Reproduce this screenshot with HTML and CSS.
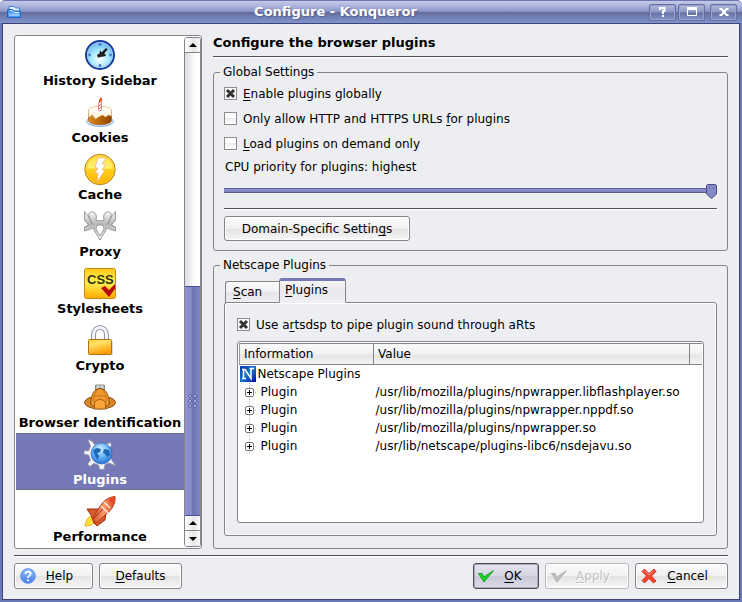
FILE: index.html
```html
<!DOCTYPE html>
<html lang="en">
<head>
<meta charset="utf-8">
<title>Configure - Konqueror</title>
<link rel="stylesheet" href="styles.css">
</head>
<body>
<div class="window">
  <header class="titlebar">
    <svg class="title-icon" width="16" height="16" viewBox="0 0 16 16">
      <path d="M3 2.500h5l1.500 1.500h4v9h-10.500z" fill="#e4f1ff" stroke="#3b7fdc"/>
      <path d="M1.500 13.500v-8l5 0 1.500 1.500h6.500v6.500z" fill="#4a97f0" stroke="#1f62cc"/>
      <path d="M3 9.500h10.500v2.500H3z" fill="#8cc4ff"/>
      <path d="M4 6.500h2l2 2h5" fill="none" stroke="#d5eaff"/>
    </svg>
    <h1 class="title">Configure - Konqueror</h1>
    <div class="title-buttons">
      <button class="tb-btn" aria-label="Help">
        <svg width="12" height="12" viewBox="0 0 12 12"><path d="M3 4V2h4.500v3H6v3M5 10h2" fill="none" stroke="#fff" stroke-width="2"/></svg>
      </button>
      <button class="tb-btn" aria-label="Maximize">
        <svg width="12" height="12" viewBox="0 0 12 12"><path d="M1.500 2v7.500h9V2" fill="none" stroke="#fff"/><path d="M1 2.500h10" stroke="#fff" stroke-width="3"/></svg>
      </button>
      <button class="tb-btn tb-close" aria-label="Close">
        <svg width="12" height="12" viewBox="0 0 12 12"><path d="M1.500 3h2L8.500 9h2M10.500 3h-2L3.500 9h-2" fill="none" stroke="#fff" stroke-width="2"/></svg>
      </button>
    </div>
  </header>

  <main class="content">
    <div class="panes">
      <nav class="sidebar">
        <ul class="pages">
          <li class="page">
            <svg width="32" height="32" viewBox="0 0 32 32">
              <defs><radialGradient id="clk" cx=".5" cy=".65" r=".6"><stop offset="0" stop-color="#fff"/><stop offset=".5" stop-color="#a9ebff"/><stop offset="1" stop-color="#69b6ee"/></radialGradient></defs>
              <circle cx="16" cy="15" r="14" fill="url(#clk)" stroke="#143d9c" stroke-width="2"/>
              <circle cx="16" cy="15" r="12.500" fill="none" stroke="#a8c8ef"/>
              <g fill="#4a7cc4"><circle cx="16" cy="4.500" r="1.400"/><circle cx="16" cy="25.500" r="1.400"/><circle cx="5.500" cy="15" r="1.400"/><circle cx="26.500" cy="15" r="1.400"/></g>
              <path d="M16 10l1.500 2.500L22 8l1.500 1.500L18 16l-4 1.500-.5-2 2-2z" fill="#111"/><path d="M13 14.500l8-1 1 2.500-8 1.500z" fill="#222"/>
            </svg>
            <a class="page-link" href="#">History Sidebar</a>
          </li>
          <li class="page">
            <svg width="32" height="32" viewBox="0 0 32 32">
              <defs><linearGradient id="cake"><stop offset="0" stop-color="#d98a2b"/><stop offset=".5" stop-color="#b86408"/><stop offset="1" stop-color="#8c4500"/></linearGradient></defs>
              <ellipse cx="16" cy="24.500" rx="13.500" ry="4.800" fill="#f4f8ff" stroke="#6f9fda"/>
              <path d="M4.500 14v10c2 5 21 5 23 0V14z" fill="url(#cake)" stroke="#8a5520" stroke-width=".6"/>
              <path d="M4.500 13c0-5 23-5 23 0v6l-3-1-3 2-3-2-4 2-3 2-3-4-4 2z" fill="#fff6e4" stroke="#d9b07a" stroke-width=".7"/>
              <ellipse cx="16" cy="13" rx="10.500" ry="3" fill="#fffdf6"/>
              <path d="M14.500 5.500h3v8h-3z" fill="#fff" stroke="#dc6a6a" stroke-width=".7"/>
              <path d="M14.500 9l3-2M14.500 12l3-2" stroke="#e35555"/>
              <path d="M17 0c2 3 1 5-1 6-2-2-1-3 1-6z" fill="#f04a1c"/><path d="M16.500 3l.5 2-1 1z" fill="#ffd34d"/>
            </svg>
            <a class="page-link" href="#">Cookies</a>
          </li>
          <li class="page">
            <svg width="32" height="32" viewBox="0 0 32 32">
              <defs><linearGradient id="cache" x2="0" y2="1"><stop offset="0" stop-color="#ffe04a"/><stop offset=".45" stop-color="#fff16a"/><stop offset=".5" stop-color="#ffd01c"/><stop offset="1" stop-color="#ffae00"/></linearGradient></defs>
              <circle cx="16" cy="15.500" r="15.200" fill="url(#cache)" stroke="#bd8420"/>
              <circle cx="16" cy="15.500" r="13.800" fill="none" stroke="#ffc82a"/>
              <path d="M14 4h8l-4 6 4 0-4 6 3 0-8 12 1-9h-3l3-5h-3z" fill="#fff" stroke="#e3b98c" stroke-width=".8"/>
            </svg>
            <a class="page-link" href="#">Cache</a>
          </li>
          <li class="page">
            <svg width="32" height="32" viewBox="0 0 32 32">
              <defs><linearGradient id="prx" x2="0" y2="1"><stop offset="0" stop-color="#fafafa"/><stop offset=".45" stop-color="#b4b4b4"/><stop offset="1" stop-color="#fff"/></linearGradient></defs>
              <path d="M.5.500L5 6C4 2 6 .5 9 1c3 1 4 4 3 8 2 1 6 1 8 0-1-4 0-7 3-8 3-.5 5 1 4 5L31.500.500V9l-4 5 4 2v4l-6-2-3-1-1 3-5.500 9L10.500 20l-1-3-3 1-6 2v-4l4-2-4-5z" fill="url(#prx)" stroke="#858585" stroke-width=".8"/>
              <path d="M5 6l3 7M27 6l-3 7" stroke="#888"/>
              <path d="M16 14c3 0 4 1 4 4l-4 7-4-7c0-3 1-4 4-4z" fill="#fff" stroke="#999"/>
            </svg>
            <a class="page-link" href="#">Proxy</a>
          </li>
          <li class="page">
            <svg width="32" height="32" viewBox="0 0 32 32">
              <defs><linearGradient id="css" x2="0" y2="1"><stop offset="0" stop-color="#ffc819"/><stop offset=".45" stop-color="#fff252"/><stop offset="1" stop-color="#ffab00"/></linearGradient></defs>
              <rect x=".5" y=".5" width="31" height="30" rx="2" fill="url(#css)" stroke="#c98518"/>
              <text class="css-glyph" x="3" y="16">CSS</text>
              <path d="M17 20l4-2 4 4 6-6v5l-6 8z" fill="#b80c0c"/>
            </svg>
            <a class="page-link" href="#">Stylesheets</a>
          </li>
          <li class="page">
            <svg width="32" height="32" viewBox="0 0 32 32">
              <defs><linearGradient id="lock" x2=".4" y2="1"><stop offset="0" stop-color="#ffd02c"/><stop offset=".35" stop-color="#ffe36a"/><stop offset="1" stop-color="#ff9d08"/></linearGradient></defs>
              <path d="M9.500 16v-6c0-10 13-10 13 0v6" fill="none" stroke="#8f94a6" stroke-width="5"/>
              <path d="M9.500 16v-6c0-10 13-10 13 0v6" fill="none" stroke="#f2f3f8" stroke-width="3"/>
              <path d="M5.500 16h23v14h-23z" fill="#b9b9b9"/>
              <rect x="4.500" y="14.500" width="23" height="15" rx="1" fill="url(#lock)" stroke="#b56f18"/>
            </svg>
            <a class="page-link" href="#">Crypto</a>
          </li>
          <li class="page">
            <svg width="32" height="32" viewBox="0 0 32 32">
              <path d="M11.500 3h9v5h-9z" fill="#bbb" stroke="#888"/><path d="M14 3v4M18 3v4" stroke="#eee"/>
              <ellipse cx="16" cy="20.500" rx="15.500" ry="6.500" fill="#d9852a" stroke="#8b5012"/>
              <path d="M6.500 21c1-4 1-14 9.500-14.500 8.500.5 8.500 10.500 9.500 14.500-2 6-17 6-19 0z" fill="#f09a2c" stroke="#8b5012"/>
              <path d="M9 14h14M13 8c-3 5-3 8-3 12M19 8c3 5 3 8 3 12" fill="none" stroke="#c9771c"/>
              <path d="M10.500 27v-5c0-6 11-6 11 0v5z" fill="#f9a53a" stroke="#a8611a"/>
            </svg>
            <a class="page-link" href="#">Browser Identification</a>
          </li>
          <li class="page selected">
            <svg width="32" height="32" viewBox="0 0 32 32">
              <defs><radialGradient id="globe" cx=".45" cy=".3" r=".75"><stop offset="0" stop-color="#d5efff"/><stop offset=".5" stop-color="#62b4f6"/><stop offset="1" stop-color="#1e64cf"/></radialGradient></defs>
              <path d="M3.500 0l5 2.500 2 3 4-1.500 8 1 4-1.500 1 3-2 2.500 1.500 9 1 3.500 4 5.500-7-3-4 1.500-1 5-4.500 0-1-4.500-4.500-1.500-4 3-2.500-2.500 3-4-2-5-4.500-.5v-4l4.500.5 2-5z" fill="#f4f4f4" stroke="#8a8aa0" stroke-width=".8"/>
              <circle cx="17.500" cy="14.500" r="10.500" fill="url(#globe)" stroke="#2860b8" stroke-width=".7"/>
              <path d="M9 11l4-2 4 1-1 3-3 1 2 3-1 4-3-4zM20 10l5 1 1 5-3 2-2-3-2-1z" fill="#1f68b4"/>
            </svg>
            <a class="page-link" href="#" aria-current="page">Plugins</a>
          </li>
          <li class="page">
            <svg width="32" height="32" viewBox="0 0 32 32">
              <defs><linearGradient id="rkt"><stop offset="0" stop-color="#d04a1c"/><stop offset=".5" stop-color="#f59a6a"/><stop offset="1" stop-color="#dc4d22"/></linearGradient></defs>
              <path d="M8 20C3 21 2 25 1 30c5 0 9-2 11-6z" fill="#ffe23e" stroke="#f2a71b"/>
              <path d="M18 13H3l4 6 3 8 3 3 8-6 1-8z" fill="#d75a2a" stroke="#9c2c10"/>
              <path d="M8 23l9-14C21 3 26 1 31 .5c.5 5-1 11-7 16L12 27z" fill="url(#rkt)" stroke="#b63a18"/>
              <path d="M17 10l7 7M20 6l6 6" stroke="#ffe2d4" stroke-width="1.500"/><path d="M9 23L19 13" stroke="#a53414"/>
              <path d="M24 4l6-3-1 7z" fill="#f0442a"/>
            </svg>
            <a class="page-link" href="#">Performance</a>
          </li>
        </ul>
        <div class="scrollbar">
          <button class="sb-btn" aria-label="Scroll up"><span class="arrow up"></span></button>
          <div class="track"></div>
          <div class="thumb"><span class="grip"></span></div>
          <button class="sb-btn" aria-label="Scroll up one line"><span class="arrow up"></span></button>
          <button class="sb-btn" aria-label="Scroll down"><span class="arrow down"></span></button>
        </div>
      </nav>

      <section class="panel">
        <h2 class="heading">Configure the browser plugins</h2>
        <hr class="rule">

        <fieldset class="group global">
          <legend>Global Settings</legend>
          <div class="check-row"><input type="checkbox" id="enable" checked><label for="enable"><u>E</u>nable plugins globally</label></div>
          <div class="check-row"><input type="checkbox" id="http"><label for="http">Only allow HTTP and HTTPS URLs <u>f</u>or plugins</label></div>
          <div class="check-row"><input type="checkbox" id="demand"><label for="demand"><u>L</u>oad plugins on demand only</label></div>
          <label class="cpu-label" for="cpu">CPU priority for plugins: highest</label>
          <input class="slider" type="range" id="cpu" min="0" max="100" value="100">
          <hr class="rule">
          <button class="btn domain">Domain-Specific Settin<u>g</u>s</button>
        </fieldset>

        <fieldset class="group netscape">
          <legend>Netscape Plugins</legend>
          <div class="tabs" role="tablist">
            <button class="tab" role="tab"><u>S</u>can</button>
            <button class="tab active" role="tab" aria-selected="true"><u>P</u>lugins</button>
          </div>
          <div class="tab-panel">
            <div class="check-row"><input type="checkbox" id="arts" checked><label for="arts">Use a<u>r</u>tsdsp to pipe plugin sound through aRts</label></div>
            <div class="list-view">
              <table class="tree">
                <thead>
                  <tr><th class="col-info">Information</th><th>Value</th><th class="col-end"></th></tr>
                </thead>
                <tbody>
                  <tr><td colspan="3"><span class="root">
                    <svg width="16" height="16" viewBox="0 0 16 16"><defs><linearGradient id="ns" x2="1" y2="1"><stop offset="0" stop-color="#0a35b8"/><stop offset=".5" stop-color="#1976cf"/><stop offset="1" stop-color="#0508a8"/></linearGradient></defs><rect width="16" height="16" fill="url(#ns)"/><path d="M2 12.500h4M3.500 12V3.500M2 3.500h3l6 9V3M9.500 2.500H14" fill="none" stroke="#fff" stroke-width="1.500"/></svg>
                    Netscape Plugins</span></td></tr>
                  <tr><td><span class="node"><span class="expander"></span>Plugin</span></td><td colspan="2">/usr/lib/mozilla/plugins/npwrapper.libflashplayer.so</td></tr>
                  <tr><td><span class="node"><span class="expander"></span>Plugin</span></td><td colspan="2">/usr/lib/mozilla/plugins/npwrapper.nppdf.so</td></tr>
                  <tr><td><span class="node"><span class="expander"></span>Plugin</span></td><td colspan="2">/usr/lib/mozilla/plugins/npwrapper.so</td></tr>
                  <tr><td><span class="node"><span class="expander"></span>Plugin</span></td><td colspan="2">/usr/lib/netscape/plugins-libc6/nsdejavu.so</td></tr>
                </tbody>
              </table>
            </div>
          </div>
        </fieldset>
      </section>
    </div>

    <hr class="rule">
    <footer class="actions">
      <button class="btn with-icon help">
        <svg width="16" height="16" viewBox="0 0 16 16"><defs><linearGradient id="hlp" x2="0" y2="1"><stop offset="0" stop-color="#8db9ff"/><stop offset="1" stop-color="#4a82ee"/></linearGradient></defs><circle cx="8" cy="8" r="7.300" fill="url(#hlp)" stroke="#5a8ce8"/><path d="M5.500 6.200c0-3.500 5.200-3.200 5.200-.4C10.700 7.700 8 7.500 8 10M8 11.500v1.800" fill="none" stroke="#fff" stroke-width="1.800"/></svg>
        <span><u>H</u>elp</span>
      </button>
      <button class="btn defaults"><u>D</u>efaults</button>
      <button class="btn with-icon ok">
        <svg width="16" height="16" viewBox="0 0 16 16"><path d="M.5 5.500h3.500L6 9l9.500-6.500L6 14z" fill="#14dc22" stroke="#0b8a16" stroke-width=".8"/></svg>
        <span><u>O</u>K</span>
      </button>
      <button class="btn with-icon apply" disabled>
        <svg width="16" height="16" viewBox="0 0 16 16"><path d="M.5 5.500h3.500L6 9l9.500-6.500L6 14z" fill="#c0c0c0" stroke="#aaa" stroke-width=".8"/></svg>
        <span><u>A</u>pply</span>
      </button>
      <button class="btn with-icon cancel">
        <svg width="16" height="16" viewBox="0 0 16 16"><path d="M3.500 1L8 5.500 13 1l2 2.500L10.500 8l4.500 5-2.500 2L8 10.500 3.500 15 1 12.500 5.500 8 1 3.500z" fill="#f8432c" stroke="#c52414" stroke-width=".8"/><path d="M3.500 2.500L8 7l4.500-4.500" fill="none" stroke="#ff9a80"/></svg>
        <span><u>C</u>ancel</span>
      </button>
    </footer>
  </main>
</div>
</body>
</html>
```

FILE: styles.css
```css
:root {
  --bg: #edeef2;
  --line: #848588;
  --accent: #7579b8;
  --face: linear-gradient(#fbfbfc, #f0f0f1 50%, #e3e3e4 52%, #f7f7f8);
}

* { box-sizing: border-box; }

body {
  margin: 0;
  background: #fff;
  color: #000;
  font: 12px/16px "DejaVu Sans", sans-serif;
}

button, input { margin: 0; padding: 0; font: inherit; color: inherit; }
svg { display: block; flex: none; }
u { text-underline-offset: 2px; text-decoration-thickness: 1px; text-decoration-skip-ink: none; }

.window {
  display: flex;
  flex-direction: column;
  min-height: 100vh;
  border-top: 1px solid #7174b4;
  border-radius: 5px 5px 0 0;
  background: #6b78b8;
  overflow: hidden;
}

.titlebar {
  display: flex;
  align-items: center;
  height: 22px;
  padding: 0 5px 0 6px;
  background: linear-gradient(#c3cae8, #a3add8 30%, #8792c4 48%, #626c9c 52%, #7281b4 75%, #8093cd);
}

.title {
  flex: 1;
  margin: 0;
  color: #fff;
  font-size: 13px;
  text-align: center;
  text-shadow: 1px 1px 1px #55608f;
}

.title-buttons { display: flex; gap: 2px; }

.tb-btn {
  display: grid;
  place-items: center;
  width: 27px;
  height: 17px;
  border: 1px solid #66709f;
  border-radius: 2px;
  background: linear-gradient(#b3bbdc, #8c97c5 48%, #6772a3 52%, #8594c8);
  box-shadow: inset 0 0 0 1px #97a2d0;
}

.tb-close { margin-left: 3px; }

.content {
  display: flex;
  flex: 1;
  flex-direction: column;
  margin: 0 2px 2px;
  padding: 11px 11px 10px;
  border: 1px solid #3d4378;
  background: var(--bg);
}

.panes { display: flex; flex: 1; gap: 11px; margin-bottom: 6px; }

.rule {
  width: 100%;
  height: 2px;
  margin: 0;
  border: 0;
  border-top: 1px solid #505154;
  border-bottom: 1px solid #fff;
}

/* Page list */
.sidebar {
  display: flex;
  flex: none;
  width: 188px;
  padding: 1px 0 1px 1px;
  border: 1px solid var(--line);
  border-radius: 3px;
  background: #fff;
}

.pages {
  display: flex;
  flex: 1;
  flex-direction: column;
  justify-content: flex-end;
  height: 510px;
  margin: 0;
  padding: 0;
  list-style: none;
  overflow: hidden;
}

.page {
  display: flex;
  flex: none;
  flex-direction: column;
  align-items: center;
  gap: 1px;
  height: 57px;
  padding-top: 6px;
}

.page.selected { border: solid #6c6d80; border-width: 1px 0; padding-top: 5px; background: var(--accent); color: #fff; }
.page-link { color: inherit; font-size: 13px; font-weight: bold; text-decoration: none; white-space: nowrap; }
.css-glyph { font: bold 13px "Liberation Sans", sans-serif; fill: #33331a; }

.scrollbar {
  display: flex;
  flex-direction: column;
  width: 17px;
  border: 1px solid var(--line);
  border-radius: 3px;
  overflow: hidden;
}

.sb-btn {
  display: grid;
  place-items: center;
  height: 15px;
  border: 0;
  border-bottom: 1px solid var(--line);
  background: linear-gradient(90deg, #fff, #e6e6e8 60%, #fafafa);
}

.sb-btn:last-child { border-bottom: 0; }
.arrow { border: 4px solid transparent; }
.arrow.up { border-top: 0; border-bottom-color: #000; }
.arrow.down { border-bottom: 0; border-top-color: #000; }
.track { flex: 1; background: linear-gradient(90deg, #dcdce1, #fafafa 60%, #fff); }

.thumb {
  display: grid;
  place-items: center;
  height: 230px;
  border: solid #4c5090;
  border-width: 1px 0;
  background: linear-gradient(90deg, #9095d2, #8388c6 45%, #6f74b2 50%, #8085c4);
}

.grip {
  width: 10px;
  height: 15px;
  background: radial-gradient(circle at 2px 2px, #a9ade0 1px, #6064a4 1px 2px, transparent 2px) 0 0 / 5px 5px;
}

/* Right-hand panel */
.panel { display: flex; flex: 1; flex-direction: column; min-width: 0; }
.heading { margin: 0 0 5px; font-size: 13px; line-height: 16px; }

.group {
  min-width: 0;
  margin: 0;
  padding: 0 10px 9px;
  border: 1px solid var(--line);
  border-radius: 3px;
}

.group legend { margin-left: -4px; padding: 0 3px; }
.global { margin-top: 6px; padding-top: 1px; }
.global .rule { margin-bottom: 6px; }

.check-row { display: flex; align-items: center; gap: 6px; height: 25px; white-space: nowrap; }

input[type="checkbox"] {
  appearance: none;
  flex: none;
  width: 13px;
  height: 13px;
  border: 1px solid #8d8d90;
  background: linear-gradient(#fff, #fff 45%, #ededef 50%, #fff);
}

input[type="checkbox"]:checked {
  background: #fafafa url("data:image/svg+xml,%3Csvg xmlns='http://www.w3.org/2000/svg' viewBox='0 0 11 11'%3E%3Cpath d='M2 2l7 7M9 2l-7 7' stroke='%23333' stroke-width='3'/%3E%3C/svg%3E");
}

.cpu-label { display: block; padding: 3px 1px; }

.slider {
  display: block;
  appearance: none;
  width: 100%;
  height: 16px;
  margin: 5px 0 9px;
  background: linear-gradient(#5a5e90, #5a5e90 1px, #8e93d3 1px, #7b80c2 4px, #5a5e90 4px) 0 5px / 100% 5px no-repeat;
}

.slider::-webkit-slider-thumb {
  appearance: none;
  width: 11px;
  height: 15px;
  background: url("data:image/svg+xml,%3Csvg xmlns='http://www.w3.org/2000/svg' viewBox='0 0 11 15'%3E%3Cpath d='M1.500.500h8l1 1v8.500l-5 4.500-5-4.500v-8.500z' fill='%23858ac9' stroke='%23484c80'/%3E%3Cpath d='M3 4h1M7 4h1' stroke='%23484c80'/%3E%3C/svg%3E");
}

.btn {
  height: 26px;
  padding: 0 14px;
  border: 1px solid #85868a;
  border-radius: 3px;
  background: var(--face);
  box-shadow: inset 0 0 0 1px #fff;
  white-space: nowrap;
}

.domain { display: block; height: 25px; min-width: 186px; }

.netscape {
  display: flex;
  flex: 1;
  flex-direction: column;
  margin-top: 6px;
  padding-bottom: 12px;
}

.tabs { display: flex; align-items: flex-end; height: 30px; margin: 0 0 -1px 1px; }

.tab {
  min-width: 54px;
  height: 22px;
  padding: 0 14px 0 7px;
  border: 1px solid var(--line);
  border-right: 0;
  border-radius: 3px 0 0 0;
  background: linear-gradient(#f9f9fa, #f1f1f3 48%, #e4e5e8 52%, #efeff2);
  text-align: left;
}

.tab.active {
  position: relative;
  min-width: 67px;
  height: 25px;
  padding: 0 14px 4px 5px;
  border: 1px solid var(--line);
  border-top: 3px solid var(--accent);
  border-bottom-color: var(--bg);
  border-radius: 3px 3px 0 0;
  background: linear-gradient(#f5f5f7, #e9e9ec 40%, var(--bg));
}

.tab-panel {
  display: flex;
  flex: 1;
  flex-direction: column;
  padding: 9px 12px 12px;
  border: 1px solid var(--line);
  border-radius: 3px;
  box-shadow: inset 1px 1px 0 #fff, inset -1px -1px 0 #fafafa;
}

.list-view {
  flex: 1;
  margin-top: 4px;
  padding: 1px;
  border: 1px solid var(--line);
  border-radius: 3px;
  background: #fff;
}

.tree { width: 100%; border-collapse: collapse; table-layout: fixed; }
.tree th {
  height: 21px;
  padding: 0 4px;
  border: 1px solid var(--line);
  border-left-color: #9b9c9f;
  background: linear-gradient(#fafafa, #f1f1f1 48%, #e5e5e5 52%, #f4f4f4);
  font-weight: normal;
  text-align: left;
}
.tree .col-info { width: 134px; }
.tree .col-end { width: 13px; padding: 0; border-right: 0; }
.tree td { height: 18px; padding: 0 2px; line-height: 18px; white-space: nowrap; }
.tree td:first-child { padding-left: 1px; }

.root, .node { display: flex; align-items: center; height: 18px; }
.root { gap: 2px; margin-left: -1px; }
.node {
  gap: 7px;
  padding-left: 4px;
  background:
    repeating-linear-gradient(#b5b5b5 0 1px, transparent 1px 2px) 8px 0 / 1px 100% no-repeat,
    linear-gradient(#b5b5b5, #b5b5b5) 14px 9px / 1px 1px no-repeat;
}

.expander {
  width: 9px;
  height: 9px;
  border: 1px solid #77787a;
  border-radius: 2px;
  background:
    linear-gradient(#000, #000) center / 5px 1px no-repeat,
    linear-gradient(#000, #000) center / 1px 5px no-repeat,
    #fff;
}

/* Bottom buttons */
.actions { display: flex; gap: 6px; margin-top: 6px; }
.with-icon { display: flex; align-items: center; padding: 0 9px 0 5px; }
.with-icon span { flex: 1; }
.help { min-width: 79px; }
.defaults { min-width: 83px; }
.ok {
  min-width: 66px;
  margin-left: auto;
  padding: 0 6px 0 4px;
  border-color: #4c4d56;
  background: linear-gradient(#e4e4ee, #d6d6e3 48%, #c9c9d9 52%, #dcdce8);
  box-shadow: inset 0 0 0 1px #a9a9b6;
}
.apply { min-width: 84px; border-color: #b6b7ba; color: #c2c3c6; text-shadow: 1px 1px 0 #fff; }
.cancel { min-width: 93px; }
```
